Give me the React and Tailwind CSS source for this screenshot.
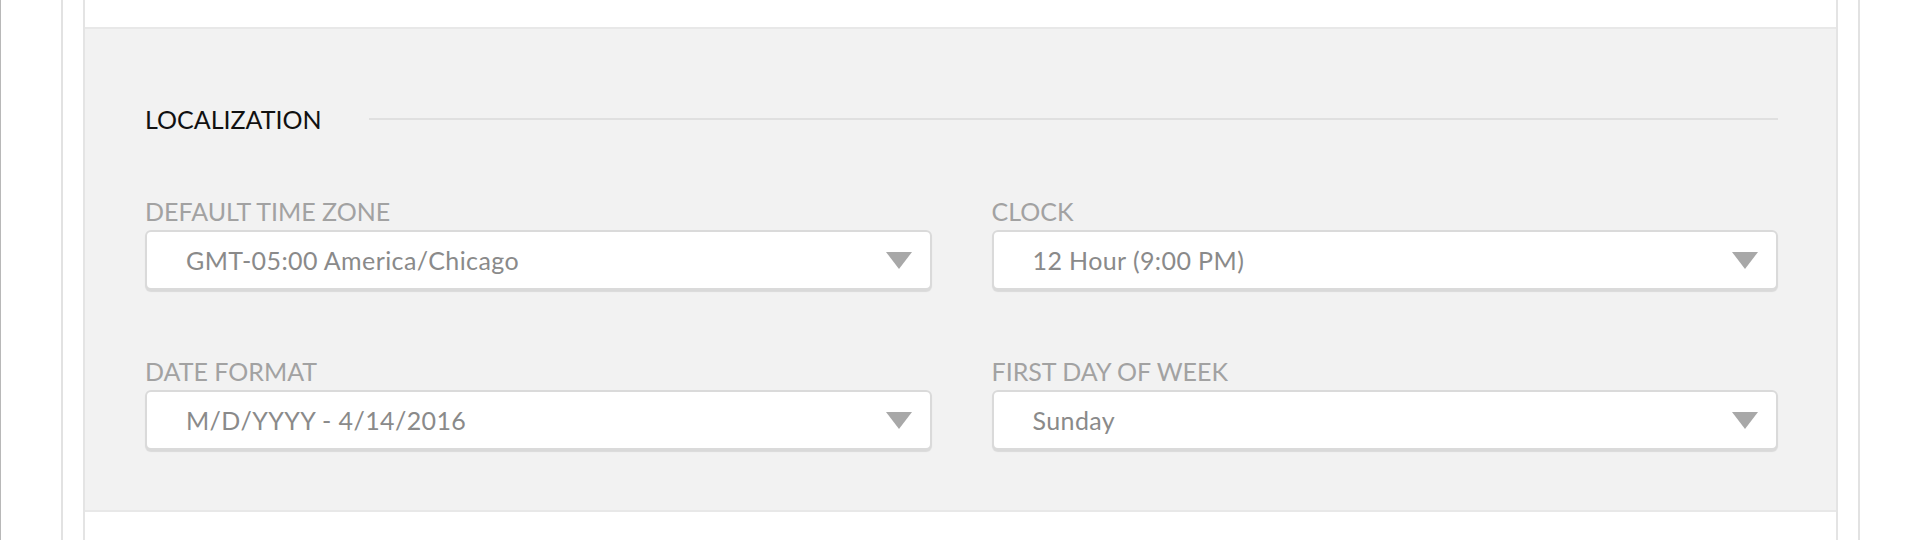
import React from "react";

function Select({ value }) {
  return (
    <div className="relative h-[60px] rounded-[6px] border-2 border-[#dadada] bg-white shadow-[0_2px_1px_rgba(0,0,0,0.10)] pl-[39px] pt-[13px]">
      <div className="text-[25px] leading-[30px] tracking-[0.4px] text-[#8a8a8a]">{value}</div>
      <svg className="absolute right-[18px] top-[20px]" width="26" height="17" viewBox="0 0 26 17">
        <polygon points="0,0 26,0 13,17" fill="#a8a8a8" />
      </svg>
    </div>
  );
}

function Field({ label, value }) {
  return (
    <div className="flex flex-col">
      <div className="text-[25px] leading-[30px] text-[#a2a2a2] mb-[4px]">{label}</div>
      <Select value={value} />
    </div>
  );
}

export default function App() {
  return (
    <div
      className="w-[1920px] h-[540px] overflow-hidden bg-white border-l border-[#b8b8b8]"
      style={{ fontFamily: "Lato, 'Open Sans', sans-serif" }}
    >
      <div className="ml-[60px] w-[1799px] h-full border-x-2 border-[#e2e2e2] px-[20px]">
        <div className="h-full border-x-2 border-[#e4e4e4] flex flex-col">
          <div className="h-[29px] bg-white border-b-2 border-[#e8e8e8] shrink-0" />
          <div className="bg-[#f2f2f2] border-b-2 border-[#e8e8e8] pl-[60px] pr-[58px] pt-[75px] h-[483px] shrink-0">
            <div className="flex items-center">
              <div className="text-[25px] leading-[30px] text-[#111]">LOCALIZATION</div>
              <div className="ml-[47px] flex-1 h-[2px] bg-[#e0e0e0]" />
            </div>
            <div className="mt-[62px] grid grid-cols-2 gap-x-[60px] gap-y-[66px]">
              <Field label="DEFAULT TIME ZONE" value="GMT-05:00 America/Chicago" />
              <Field label="CLOCK" value="12 Hour (9:00 PM)" />
              <Field label="DATE FORMAT" value="M/D/YYYY - 4/14/2016" />
              <Field label="FIRST DAY OF WEEK" value="Sunday" />
            </div>
          </div>
          <div className="flex-1 bg-white" />
        </div>
      </div>
    </div>
  );
}
